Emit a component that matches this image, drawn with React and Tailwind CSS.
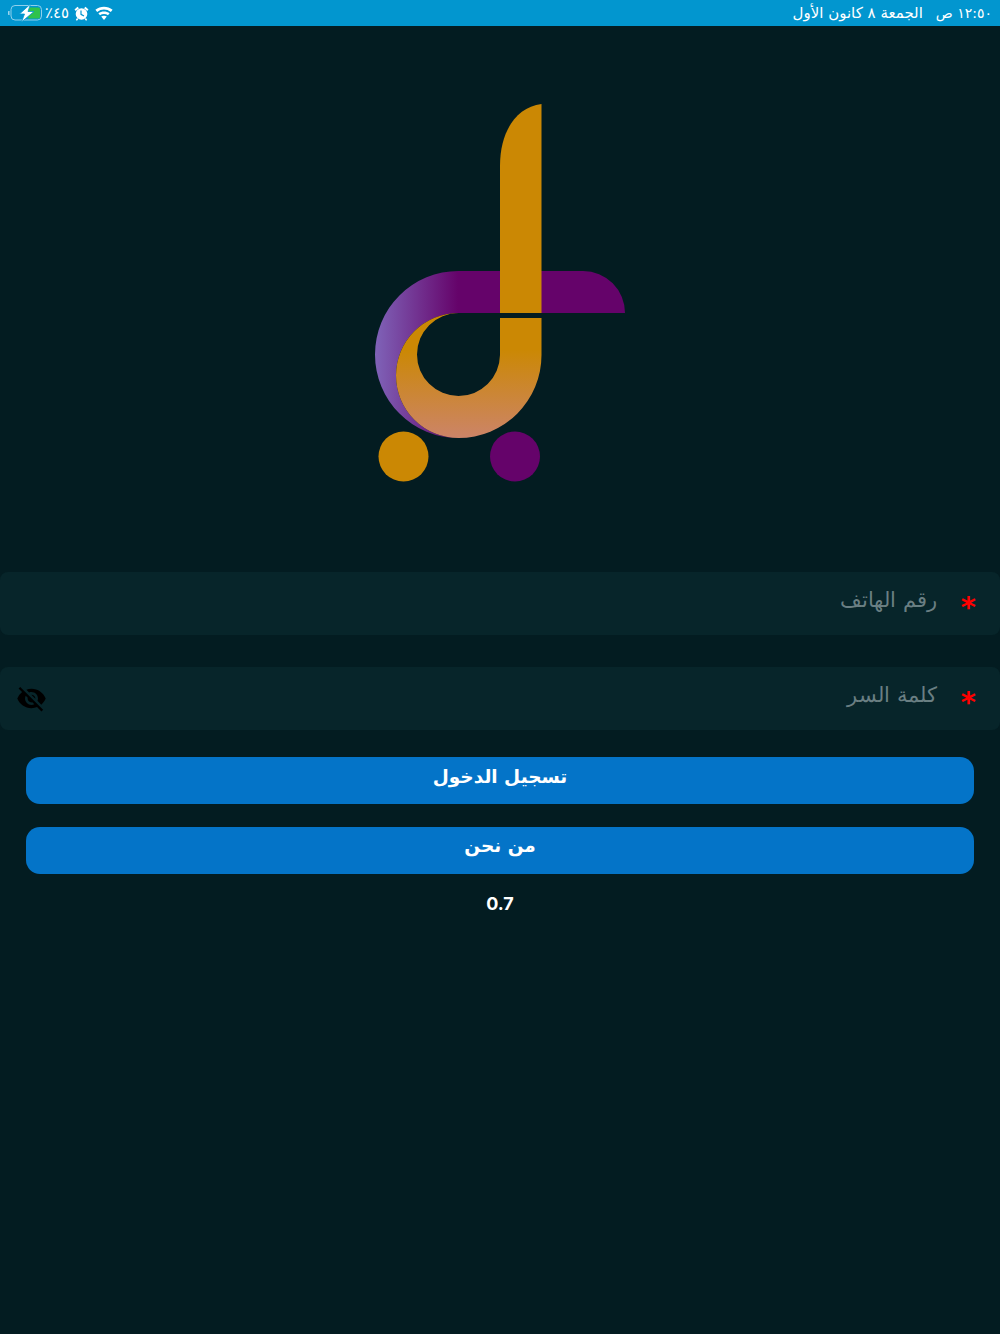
import React from "react";
import { MdVisibilityOff } from "react-icons/md";

function Logo() {
  return (
    <svg width="250" height="378" viewBox="375 104 250 378" className="block" aria-label="logo">
      <defs>
        <linearGradient id="pg" gradientUnits="userSpaceOnUse" x1="375" y1="0" x2="458" y2="0">
          <stop offset="0" stopColor="#7f63b8" />
          <stop offset="1" stopColor="#65036a" />
        </linearGradient>
        <linearGradient id="gg" gradientUnits="userSpaceOnUse" x1="0" y1="350" x2="0" y2="438">
          <stop offset="0" stopColor="#cb8804" />
          <stop offset="1" stopColor="#cc8468" />
        </linearGradient>
      </defs>
      <path d="M625 313 A42 42 0 0 0 583 271 L458.5 271 A83.5 83.5 0 0 0 458.5 438 A62.5 62.5 0 0 1 458.5 313 L625 313 Z" fill="url(#pg)" />
      <path d="M500 318 H541.5 V355 A83 83 0 0 1 458.5 438 A62.5 62.5 0 0 1 458.5 313 A41.5 41.5 0 0 0 458.5 396 A41.5 41.5 0 0 0 500 355 Z" fill="url(#gg)" />
      <path d="M541.5 104 V313 H500 V166 C500 132 516 107 541.5 104 Z" fill="#cb8804" />
      <circle cx="403.5" cy="456.5" r="25" fill="#cb8804" />
      <circle cx="515" cy="456.5" r="25" fill="#65036a" />
    </svg>
  );
}

function Battery() {
  return (
    <svg width="35" height="18" viewBox="0 0 35 18" className="block">
      <path d="M1 7 V11 C0.3 10.5 0.3 7.5 1 7Z" fill="#9fd6ee" stroke="#9fd6ee" />
      <rect x="3" y="1.5" width="30.5" height="14.5" rx="4" fill="none" stroke="#8fd0ec" strokeWidth="1" />
      <rect x="20" y="3.5" width="12" height="11" rx="1.5" fill="#2fc24b" />
      <path d="M22.5 0 L11.5 10 H16.5 L13.5 18 L26 7.5 H20 Z" fill="#fff" stroke="#0497d0" strokeWidth="0.8" />
    </svg>
  );
}

function AlarmFilled() {
  return (
    <svg width="15" height="15" viewBox="0 0 15 15" className="block" fill="#fff">
      <circle cx="7.5" cy="8" r="5.8" />
      <path d="M0.5 3.5 L3.5 0.8 L5 2.2 L1.8 5 Z M14.5 3.5 L11.5 0.8 L10 2.2 L13.2 5 Z M3 12 L1.8 14 L3 14.8 L4.4 13 Z M12 12 L13.2 14 L12 14.8 L10.6 13 Z" />
      <path d="M7 4.5 V8.3 L10 10" fill="none" stroke="#0497d0" strokeWidth="1.2" />
    </svg>
  );
}

function Wifi() {
  return (
    <svg width="18" height="14" viewBox="0 0 18 14" className="block" fill="#fff">
      <path d="M9 14 L6.2 10.6 C7.8 9.4 10.2 9.4 11.8 10.6 Z" />
      <path d="M5 9.2 L3.4 7.3 C6.5 4.8 11.5 4.8 14.6 7.3 L13 9.2 C10.7 7.5 7.3 7.5 5 9.2 Z" />
      <path d="M2.2 5.9 L0.4 3.8 C5.3 -0.3 12.7 -0.3 17.6 3.8 L15.8 5.9 C11.8 2.6 6.2 2.6 2.2 5.9 Z" />
    </svg>
  );
}

function Field({ label, eye }) {
  return (
    <div className="relative flex h-[63px] items-center rounded-lg bg-[#07252a] pr-[24px]">
      <span className="mt-[7px] w-[14px] text-center text-[29px] leading-none font-bold text-[#ff0000] [font-family:'DejaVu_Sans',sans-serif]">*</span>
      <span className="mr-[25px] -mt-[7px] text-[21px] leading-none text-[#6a7f83] [font-family:'DejaVu_Sans',sans-serif] font-extralight">{label}</span>
      {eye && (
        <MdVisibilityOff className="absolute left-[16px] top-[16px] text-[31px] text-black" />
      )}
    </div>
  );
}

function Btn({ children, pt }) {
  return (
    <button className={"flex h-[47px] w-full items-start justify-center rounded-[14px] bg-[#0474c8] text-[18.5px] leading-[24px] font-bold text-white [font-family:'DejaVu_Sans',sans-serif] " + pt}>
      {children}
    </button>
  );
}

export default function App() {
  return (
    <div dir="rtl" className="flex min-h-[1334px] w-[1000px] flex-col bg-[#031c21]">
      <div className="flex h-[26px] items-center justify-between bg-[#0296cf] pr-[8px] pl-[8px] text-white [font-family:'DejaVu_Sans',sans-serif]">
        <div className="flex items-center gap-[13px] leading-none">
          <span className="text-[14px]">١٢:٥٠ ص</span>
          <span className="text-[15px]">الجمعة ٨ كانون الأول</span>
        </div>
        <div className="flex items-center text-[15px]" dir="ltr">
          <Battery />
          <span className="ml-[2px] leading-none">٪٤٥</span>
          <span className="ml-[5px]"><AlarmFilled /></span>
          <span className="ml-[6px]"><Wifi /></span>
        </div>
      </div>

      <div className="flex justify-center pt-[78px]" dir="ltr">
        <Logo />
      </div>

      <div className="mt-[90px] flex flex-col gap-[32px]">
        <Field label="رقم الهاتف" />
        <Field label="كلمة السر" eye />
      </div>

      <div className="mt-[27px] flex flex-col gap-[23px] px-[26px]">
        <Btn pt="pt-[8px]">تسجيل الدخول</Btn>
        <Btn pt="pt-[7px]">من نحن</Btn>
      </div>

      <div className="mt-[19px] text-center text-[18px] leading-[22px] font-bold text-white [font-family:'Inter',sans-serif]">0.7</div>
    </div>
  );
}
